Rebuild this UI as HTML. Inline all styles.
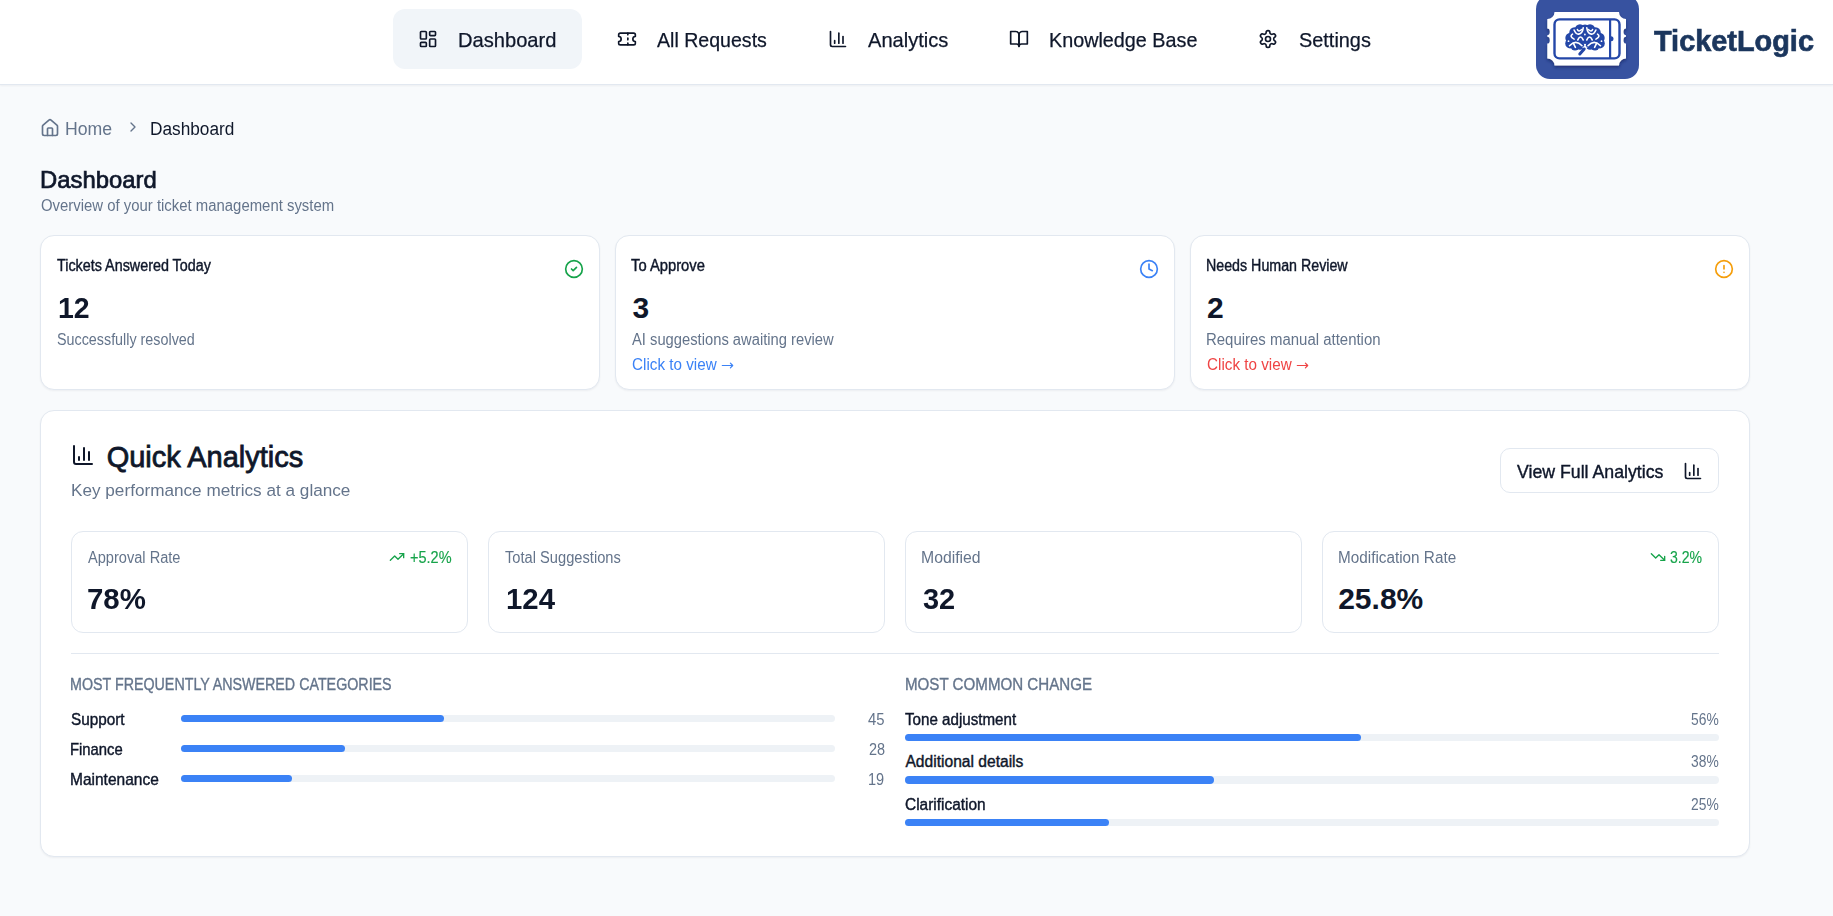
<!DOCTYPE html>
<html><head><meta charset="utf-8"><style>
html,body{margin:0;padding:0}
body{width:1833px;height:916px;position:relative;overflow:hidden;background:#f8fafc;font-family:"Liberation Sans",sans-serif}
.t{position:absolute;white-space:nowrap;transform-origin:0 0}
.ic{position:absolute}
.box{position:absolute;box-sizing:border-box}
</style></head><body>
<div class="box" style="left:0;top:0;width:1833px;height:85px;background:#fff;border-bottom:1px solid #e2e8f0;box-shadow:0 1px 2px rgba(15,23,42,0.05)"></div>
<div class="box" style="left:393px;top:9px;width:189px;height:60px;background:#f1f5f9;border-radius:12px"></div>

<div style="position:absolute;left:1536px;top:-5px;width:103px;height:84px;border-radius:14px;background:#3752a0;overflow:hidden">
<svg width="103" height="84" viewBox="0 0 103 84" style="position:absolute;left:0;top:0">
 <defs><filter id="sh" x="-20%" y="-20%" width="140%" height="160%"><feDropShadow dx="0" dy="2" stdDeviation="1.4" flood-color="#0b1d5c" flood-opacity="0.6"/></filter></defs>
 <path filter="url(#sh)" fill="#fff" d="M18.5 17 H83 A7 7 0 0 0 90 24 V33.4 A2.5 3.4 0 0 0 90 40.2 V41.8 A2.5 3.4 0 0 0 90 48.6 V63.4 A7 7 0 0 0 83 70.4 H18.5 A7 7 0 0 0 11.3 63.4 V48.6 A2.5 3.4 0 0 0 11.3 41.8 V40.2 A2.5 3.4 0 0 0 11.3 33.4 V24 A7 7 0 0 0 18.5 17 Z"/>
 <rect x="18.5" y="24.4" width="65" height="39" rx="5" fill="none" stroke="#2447a8" stroke-width="2.4"/>
 <line x1="74.1" y1="24.4" x2="74.1" y2="63.4" stroke="#2447a8" stroke-width="2.2"/>
 <path d="M75 41.3 A2.5 2.5 0 0 1 75 46.3 Z" fill="#2447a8"/>
 <g transform="translate(29,29) scale(0.1)">
  <g fill="#2447a8">
   <circle cx="150" cy="55" r="52"/><circle cx="95" cy="85" r="52"/><circle cx="55" cy="140" r="52"/><circle cx="52" cy="195" r="50"/>
   <circle cx="100" cy="220" r="45"/><circle cx="150" cy="215" r="42"/><circle cx="140" cy="140" r="70"/><circle cx="200" cy="60" r="55"/>
   <circle cx="250" cy="55" r="52"/><circle cx="305" cy="85" r="52"/><circle cx="345" cy="140" r="52"/><circle cx="348" cy="195" r="50"/>
   <circle cx="300" cy="220" r="45"/><circle cx="250" cy="215" r="42"/><circle cx="260" cy="140" r="70"/><circle cx="200" cy="140" r="60"/>
  </g>
  <path d="M170 238 Q199 200 228 238 Z" fill="#fff"/>
  <path d="M192 250 L148 300" stroke="#2447a8" stroke-width="30" stroke-linecap="round"/>
  <g fill="none" stroke="#fff" stroke-width="16" stroke-linecap="round">
   <path d="M91 60 Q110 105 137 101 Q175 95 182 39"/>
   <path d="M124 55 Q135 85 166 55"/>
   <path d="M309 60 Q290 105 263 101 Q225 95 218 39"/>
   <path d="M276 55 Q265 85 234 55"/>
   <path d="M75 101 Q40 125 91 151"/>
   <path d="M325 101 Q360 125 309 151"/>
   <path d="M128 159 Q155 100 182 159"/>
   <path d="M218 159 Q245 100 272 159"/>
   <path d="M45 217 Q108 150 170 217"/>
   <path d="M83 192 L104 234"/>
   <path d="M355 217 Q292 150 230 217"/>
   <path d="M317 192 L296 234"/>
  </g>
  <g fill="#fff"><circle cx="199" cy="105" r="9"/><circle cx="35" cy="172" r="9"/><circle cx="365" cy="172" r="9"/></g>
 </g>
</svg>
</div>
<div class="box" style="left:40px;top:235px;width:560px;height:155px;background:#fff;border:1px solid #e2e8f0;border-radius:14px;box-shadow:0 1px 2px rgba(15,23,42,0.05)"></div>
<div class="box" style="left:615px;top:235px;width:560px;height:155px;background:#fff;border:1px solid #e2e8f0;border-radius:14px;box-shadow:0 1px 2px rgba(15,23,42,0.05)"></div>
<div class="box" style="left:1190px;top:235px;width:560px;height:155px;background:#fff;border:1px solid #e2e8f0;border-radius:14px;box-shadow:0 1px 2px rgba(15,23,42,0.05)"></div>
<div class="box" style="left:40px;top:410px;width:1710px;height:446.5px;background:#fff;border:1px solid #e2e8f0;border-radius:14px;box-shadow:0 1px 2px rgba(15,23,42,0.05)"></div>
<div class="box" style="left:1500px;top:448px;width:219px;height:45px;background:#fff;border:1px solid #e2e8f0;border-radius:10px"></div>
<div class="box" style="left:71px;top:531px;width:397px;height:102px;background:#fff;border:1px solid #e2e8f0;border-radius:12px"></div>
<div class="box" style="left:488px;top:531px;width:397px;height:102px;background:#fff;border:1px solid #e2e8f0;border-radius:12px"></div>
<div class="box" style="left:905px;top:531px;width:397px;height:102px;background:#fff;border:1px solid #e2e8f0;border-radius:12px"></div>
<div class="box" style="left:1322px;top:531px;width:397px;height:102px;background:#fff;border:1px solid #e2e8f0;border-radius:12px"></div>
<div class="box" style="left:71px;top:653px;width:1648px;height:1px;background:#e2e8f0"></div>
<div class="box" style="left:181px;top:714.5px;width:654px;height:7.5px;background:#eef2f6;border-radius:4px"></div><div class="box" style="left:181px;top:714.5px;width:263px;height:7.5px;background:#3b82f6;border-radius:4px"></div><div class="box" style="left:181px;top:744.5px;width:654px;height:7.5px;background:#eef2f6;border-radius:4px"></div><div class="box" style="left:181px;top:744.5px;width:163.8px;height:7.5px;background:#3b82f6;border-radius:4px"></div><div class="box" style="left:181px;top:774.5px;width:654px;height:7.5px;background:#eef2f6;border-radius:4px"></div><div class="box" style="left:181px;top:774.5px;width:110.7px;height:7.5px;background:#3b82f6;border-radius:4px"></div><div class="box" style="left:905px;top:733.8px;width:814px;height:7.5px;background:#eef2f6;border-radius:4px"></div><div class="box" style="left:905px;top:733.8px;width:455.8px;height:7.5px;background:#3b82f6;border-radius:4px"></div><div class="box" style="left:905px;top:776px;width:814px;height:7.5px;background:#eef2f6;border-radius:4px"></div><div class="box" style="left:905px;top:776px;width:309px;height:7.5px;background:#3b82f6;border-radius:4px"></div><div class="box" style="left:905px;top:818.8px;width:814px;height:7.5px;background:#eef2f6;border-radius:4px"></div><div class="box" style="left:905px;top:818.8px;width:203.5px;height:7.5px;background:#3b82f6;border-radius:4px"></div><svg class="ic" style="left:418px;top:29px" width="20" height="20" viewBox="0 0 24 24" fill="none" stroke="#0f172a" stroke-width="2" stroke-linecap="round" stroke-linejoin="round"><rect width="7" height="9" x="3" y="3" rx="1"/><rect width="7" height="5" x="14" y="3" rx="1"/><rect width="7" height="9" x="14" y="12" rx="1"/><rect width="7" height="5" x="3" y="16" rx="1"/></svg>
<svg class="ic" style="left:617px;top:29px" width="20" height="20" viewBox="0 0 24 24" fill="none" stroke="#0f172a" stroke-width="2" stroke-linecap="round" stroke-linejoin="round"><path d="M2 9a3 3 0 0 1 0 6v2a2 2 0 0 0 2 2h16a2 2 0 0 0 2-2v-2a3 3 0 0 1 0-6V7a2 2 0 0 0-2-2H4a2 2 0 0 0-2 2Z"/><path d="M13 5v2"/><path d="M13 17v2"/><path d="M13 11v2"/></svg>
<svg class="ic" style="left:828px;top:29px" width="20" height="20" viewBox="0 0 24 24" fill="none" stroke="#0f172a" stroke-width="2" stroke-linecap="round" stroke-linejoin="round"><path d="M3 3v16a2 2 0 0 0 2 2h16"/><path d="M18 17V9"/><path d="M13 17V5"/><path d="M8 17v-3"/></svg>
<svg class="ic" style="left:1009px;top:29px" width="20" height="20" viewBox="0 0 24 24" fill="none" stroke="#0f172a" stroke-width="2" stroke-linecap="round" stroke-linejoin="round"><path d="M2 3h6a4 4 0 0 1 4 4v14a3 3 0 0 0-3-3H2z"/><path d="M22 3h-6a4 4 0 0 0-4 4v14a3 3 0 0 1 3-3h7z"/></svg>
<svg class="ic" style="left:1258px;top:29px" width="20" height="20" viewBox="0 0 24 24" fill="none" stroke="#0f172a" stroke-width="2" stroke-linecap="round" stroke-linejoin="round"><path d="M12.22 2h-.44a2 2 0 0 0-2 2v.18a2 2 0 0 1-1 1.73l-.43.25a2 2 0 0 1-2 0l-.15-.08a2 2 0 0 0-2.73.73l-.22.38a2 2 0 0 0 .73 2.73l.15.1a2 2 0 0 1 1 1.72v.51a2 2 0 0 1-1 1.74l-.15.09a2 2 0 0 0-.73 2.73l.22.38a2 2 0 0 0 2.73.73l.15-.08a2 2 0 0 1 2 0l.43.25a2 2 0 0 1 1 1.73V20a2 2 0 0 0 2 2h.44a2 2 0 0 0 2-2v-.18a2 2 0 0 1 1-1.73l.43-.25a2 2 0 0 1 2 0l.15.08a2 2 0 0 0 2.73-.73l.22-.39a2 2 0 0 0-.73-2.73l-.15-.08a2 2 0 0 1-1-1.74v-.5a2 2 0 0 1 1-1.74l.15-.09a2 2 0 0 0 .73-2.73l-.22-.38a2 2 0 0 0-2.73-.73l-.15.08a2 2 0 0 1-2 0l-.43-.25a2 2 0 0 1-1-1.73V4a2 2 0 0 0-2-2z"/><circle cx="12" cy="12" r="3"/></svg>
<svg class="ic" style="left:40px;top:117.6px" width="20" height="20" viewBox="0 0 24 24" fill="none" stroke="#64748b" stroke-width="2" stroke-linecap="round" stroke-linejoin="round"><path d="M15 21v-8a1 1 0 0 0-1-1h-4a1 1 0 0 0-1 1v8"/><path d="M3 10a2 2 0 0 1 .709-1.528l7-5.999a2 2 0 0 1 2.582 0l7 5.999A2 2 0 0 1 21 10v9a2 2 0 0 1-2 2H5a2 2 0 0 1-2-2z"/></svg>
<svg class="ic" style="left:124.5px;top:119px" width="16" height="16" viewBox="0 0 24 24" fill="none" stroke="#64748b" stroke-width="2" stroke-linecap="round" stroke-linejoin="round"><path d="m9 18 6-6-6-6"/></svg>
<svg class="ic" style="left:564px;top:259px" width="20" height="20" viewBox="0 0 24 24" fill="none" stroke="#16a34a" stroke-width="2" stroke-linecap="round" stroke-linejoin="round"><circle cx="12" cy="12" r="10"/><path d="m9 12 2 2 4-4"/></svg>
<svg class="ic" style="left:1139px;top:259px" width="20" height="20" viewBox="0 0 24 24" fill="none" stroke="#3b82f6" stroke-width="2" stroke-linecap="round" stroke-linejoin="round"><circle cx="12" cy="12" r="10"/><polyline points="12 6 12 12 16 14"/></svg>
<svg class="ic" style="left:1714px;top:259px" width="20" height="20" viewBox="0 0 24 24" fill="none" stroke="#f59e0b" stroke-width="2" stroke-linecap="round" stroke-linejoin="round"><circle cx="12" cy="12" r="10"/><line x1="12" x2="12" y1="8" y2="12"/><line x1="12" x2="12.01" y1="16" y2="16"/></svg>
<svg class="ic" style="left:71px;top:443.4px" width="24" height="24" viewBox="0 0 24 24" fill="none" stroke="#0f172a" stroke-width="2" stroke-linecap="round" stroke-linejoin="round"><path d="M3 3v16a2 2 0 0 0 2 2h16"/><path d="M18 17V9"/><path d="M13 17V5"/><path d="M8 17v-3"/></svg>
<svg class="ic" style="left:721px;top:361px" width="13" height="9" viewBox="0 0 13 9" fill="none" stroke="#3b82f6" stroke-width="1.2" stroke-linecap="round" stroke-linejoin="round"><path d="M1.3 4.5H11.6M9.4 2.1L11.7 4.5L9.4 6.9"/></svg>
<svg class="ic" style="left:1296px;top:361px" width="13" height="9" viewBox="0 0 13 9" fill="none" stroke="#ef4444" stroke-width="1.2" stroke-linecap="round" stroke-linejoin="round"><path d="M1.3 4.5H11.6M9.4 2.1L11.7 4.5L9.4 6.9"/></svg>
<svg class="ic" style="left:1683px;top:460.7px" width="20" height="20" viewBox="0 0 24 24" fill="none" stroke="#0f172a" stroke-width="2" stroke-linecap="round" stroke-linejoin="round"><path d="M3 3v16a2 2 0 0 0 2 2h16"/><path d="M18 17V9"/><path d="M13 17V5"/><path d="M8 17v-3"/></svg>
<svg class="ic" style="left:388.9px;top:548.7px" width="16" height="16" viewBox="0 0 24 24" fill="none" stroke="#16a34a" stroke-width="2" stroke-linecap="round" stroke-linejoin="round"><polyline points="22 7 13.5 15.5 8.5 10.5 2 17"/><polyline points="16 7 22 7 22 13"/></svg>
<svg class="ic" style="left:1649.9px;top:548.7px" width="16" height="16" viewBox="0 0 24 24" fill="none" stroke="#16a34a" stroke-width="2" stroke-linecap="round" stroke-linejoin="round"><polyline points="22 17 13.5 8.5 8.5 13.5 2 7"/><polyline points="16 17 22 17 22 11"/></svg>
<div class="t" style="left:458.42px;top:29.62px;font-size:20.3px;line-height:20.3px;color:#0f172a;font-weight:400;transform:scaleX(0.9923);-webkit-text-stroke:0.25px #0f172a;">Dashboard</div>
<div class="t" style="left:656.98px;top:29.62px;font-size:20.3px;line-height:20.3px;color:#0f172a;font-weight:400;transform:scaleX(0.9649);-webkit-text-stroke:0.25px #0f172a;">All Requests</div>
<div class="t" style="left:868.26px;top:29.62px;font-size:20.3px;line-height:20.3px;color:#0f172a;font-weight:400;transform:scaleX(0.9907);-webkit-text-stroke:0.25px #0f172a;">Analytics</div>
<div class="t" style="left:1049.44px;top:29.62px;font-size:20.3px;line-height:20.3px;color:#0f172a;font-weight:400;transform:scaleX(0.9752);-webkit-text-stroke:0.25px #0f172a;">Knowledge Base</div>
<div class="t" style="left:1298.74px;top:29.62px;font-size:20.3px;line-height:20.3px;color:#0f172a;font-weight:400;transform:scaleX(0.9809);-webkit-text-stroke:0.25px #0f172a;">Settings</div>
<div class="t" style="left:1654.48px;top:25.50px;font-size:30px;line-height:30px;color:#1b365d;font-weight:700;transform:scaleX(0.9627);-webkit-text-stroke:0.7px #1b365d;">TicketLogic</div>
<div class="t" style="left:64.94px;top:120.36px;font-size:18px;line-height:18px;color:#64748b;font-weight:400;transform:scaleX(0.9812);">Home</div>
<div class="t" style="left:149.70px;top:120.36px;font-size:18px;line-height:18px;color:#0f172a;font-weight:400;transform:scaleX(0.9582);">Dashboard</div>
<div class="t" style="left:40.44px;top:167.58px;font-size:24px;line-height:24px;color:#0f172a;font-weight:400;transform:scaleX(0.9934);-webkit-text-stroke:0.7px #0f172a;">Dashboard</div>
<div class="t" style="left:40.74px;top:198.49px;font-size:15.6px;line-height:15.6px;color:#64748b;font-weight:400;transform:scaleX(0.9555);">Overview of your ticket management system</div>
<div class="t" style="left:56.52px;top:257.79px;font-size:15.6px;line-height:15.6px;color:#0f172a;font-weight:400;transform:scaleX(0.9200);-webkit-text-stroke:0.4px #0f172a;">Tickets Answered Today</div>
<div class="t" style="left:57.94px;top:292.91px;font-size:30px;line-height:30px;color:#0f172a;font-weight:700;transform:scaleX(0.9495);">12</div>
<div class="t" style="left:56.50px;top:331.79px;font-size:15.6px;line-height:15.6px;color:#64748b;font-weight:400;transform:scaleX(0.9187);">Successfully resolved</div>
<div class="t" style="left:631.24px;top:257.79px;font-size:15.6px;line-height:15.6px;color:#0f172a;font-weight:400;transform:scaleX(0.9475);-webkit-text-stroke:0.4px #0f172a;">To Approve</div>
<div class="t" style="left:632.50px;top:293.41px;font-size:30px;line-height:30px;color:#0f172a;font-weight:700;">3</div>
<div class="t" style="left:631.76px;top:331.79px;font-size:15.6px;line-height:15.6px;color:#64748b;font-weight:400;transform:scaleX(0.9461);">AI suggestions awaiting review</div>
<div class="t" style="left:631.92px;top:356.79px;font-size:15.6px;line-height:15.6px;color:#3b82f6;font-weight:400;transform:scaleX(0.9768);">Click to view</div>
<div class="t" style="left:1206.46px;top:257.79px;font-size:15.6px;line-height:15.6px;color:#0f172a;font-weight:400;transform:scaleX(0.9131);-webkit-text-stroke:0.4px #0f172a;">Needs Human Review</div>
<div class="t" style="left:1207.00px;top:293.41px;font-size:30px;line-height:30px;color:#0f172a;font-weight:700;">2</div>
<div class="t" style="left:1205.96px;top:331.79px;font-size:15.6px;line-height:15.6px;color:#64748b;font-weight:400;transform:scaleX(0.9589);">Requires manual attention</div>
<div class="t" style="left:1206.92px;top:356.79px;font-size:15.6px;line-height:15.6px;color:#ef4444;font-weight:400;transform:scaleX(0.9768);">Click to view</div>
<div class="t" style="left:106.70px;top:442.75px;font-size:29px;line-height:29px;color:#0f172a;font-weight:400;-webkit-text-stroke:0.8px #0f172a;">Quick Analytics</div>
<div class="t" style="left:71.18px;top:482.07px;font-size:17.4px;line-height:17.4px;color:#64748b;font-weight:400;transform:scaleX(0.9866);">Key performance metrics at a glance</div>
<div class="t" style="left:1516.52px;top:462.54px;font-size:18.5px;line-height:18.5px;color:#0f172a;font-weight:400;transform:scaleX(0.9578);-webkit-text-stroke:0.4px #0f172a;">View Full Analytics</div>
<div class="t" style="left:87.50px;top:549.79px;font-size:15.6px;line-height:15.6px;color:#64748b;font-weight:400;transform:scaleX(0.9359);">Approval Rate</div>
<div class="t" style="left:86.92px;top:584.00px;font-size:30px;line-height:30px;color:#0f172a;font-weight:700;transform:scaleX(0.9802);">78%</div>
<div class="t" style="left:409.55px;top:549.99px;font-size:15.6px;line-height:15.6px;color:#16a34a;font-weight:400;transform:scaleX(0.9299);-webkit-text-stroke:0.15px #16a34a;">+5.2%</div>
<div class="t" style="left:504.76px;top:549.79px;font-size:15.6px;line-height:15.6px;color:#64748b;font-weight:400;transform:scaleX(0.9408);">Total Suggestions</div>
<div class="t" style="left:505.68px;top:583.81px;font-size:30px;line-height:30px;color:#0f172a;font-weight:700;transform:scaleX(0.9786);">124</div>
<div class="t" style="left:920.68px;top:549.79px;font-size:15.6px;line-height:15.6px;color:#64748b;font-weight:400;transform:scaleX(1.0111);">Modified</div>
<div class="t" style="left:922.50px;top:583.81px;font-size:30px;line-height:30px;color:#0f172a;font-weight:700;transform:scaleX(0.9659);">32</div>
<div class="t" style="left:1337.68px;top:549.79px;font-size:15.6px;line-height:15.6px;color:#64748b;font-weight:400;transform:scaleX(0.9808);">Modification Rate</div>
<div class="t" style="left:1338.18px;top:583.81px;font-size:30px;line-height:30px;color:#0f172a;font-weight:700;">25.8%</div>
<div class="t" style="left:1669.89px;top:549.99px;font-size:15.6px;line-height:15.6px;color:#16a34a;font-weight:400;transform:scaleX(0.9026);-webkit-text-stroke:0.15px #16a34a;">3.2%</div>
<div class="t" style="left:70.18px;top:676.66px;font-size:16px;line-height:16px;color:#64748b;font-weight:400;transform:scaleX(0.8918);-webkit-text-stroke:0.35px #64748b;">MOST FREQUENTLY ANSWERED CATEGORIES</div>
<div class="t" style="left:70.98px;top:711.91px;font-size:15.7px;line-height:15.7px;color:#0f172a;font-weight:400;transform:scaleX(0.9755);-webkit-text-stroke:0.4px #0f172a;">Support</div>
<div class="t" style="left:70.18px;top:741.81px;font-size:15.7px;line-height:15.7px;color:#0f172a;font-weight:400;transform:scaleX(0.9456);-webkit-text-stroke:0.4px #0f172a;">Finance</div>
<div class="t" style="left:70.18px;top:771.61px;font-size:15.7px;line-height:15.7px;color:#0f172a;font-weight:400;transform:scaleX(0.9883);-webkit-text-stroke:0.4px #0f172a;">Maintenance</div>
<div class="t" style="left:868.34px;top:711.79px;font-size:15.6px;line-height:15.6px;color:#64748b;font-weight:400;transform:scaleX(0.9529);">45</div>
<div class="t" style="left:869.45px;top:741.79px;font-size:15.6px;line-height:15.6px;color:#64748b;font-weight:400;transform:scaleX(0.9279);">28</div>
<div class="t" style="left:867.97px;top:771.59px;font-size:15.6px;line-height:15.6px;color:#64748b;font-weight:400;transform:scaleX(0.9330);">19</div>
<div class="t" style="left:904.68px;top:677.46px;font-size:16px;line-height:16px;color:#64748b;font-weight:400;transform:scaleX(0.9451);-webkit-text-stroke:0.35px #64748b;">MOST COMMON CHANGE</div>
<div class="t" style="left:905.48px;top:711.79px;font-size:15.6px;line-height:15.6px;color:#0f172a;font-weight:400;transform:scaleX(0.9712);-webkit-text-stroke:0.4px #0f172a;">Tone adjustment</div>
<div class="t" style="left:905.48px;top:753.79px;font-size:15.6px;line-height:15.6px;color:#0f172a;font-weight:400;-webkit-text-stroke:0.4px #0f172a;">Additional details</div>
<div class="t" style="left:905.48px;top:796.59px;font-size:15.6px;line-height:15.6px;color:#0f172a;font-weight:400;transform:scaleX(0.9900);-webkit-text-stroke:0.4px #0f172a;">Clarification</div>
<div class="t" style="left:1691.24px;top:711.89px;font-size:15.6px;line-height:15.6px;color:#64748b;font-weight:400;transform:scaleX(0.8866);">56%</div>
<div class="t" style="left:1691.24px;top:753.89px;font-size:15.6px;line-height:15.6px;color:#64748b;font-weight:400;transform:scaleX(0.8866);">38%</div>
<div class="t" style="left:1691.24px;top:796.59px;font-size:15.6px;line-height:15.6px;color:#64748b;font-weight:400;transform:scaleX(0.8866);">25%</div>
</body></html>
